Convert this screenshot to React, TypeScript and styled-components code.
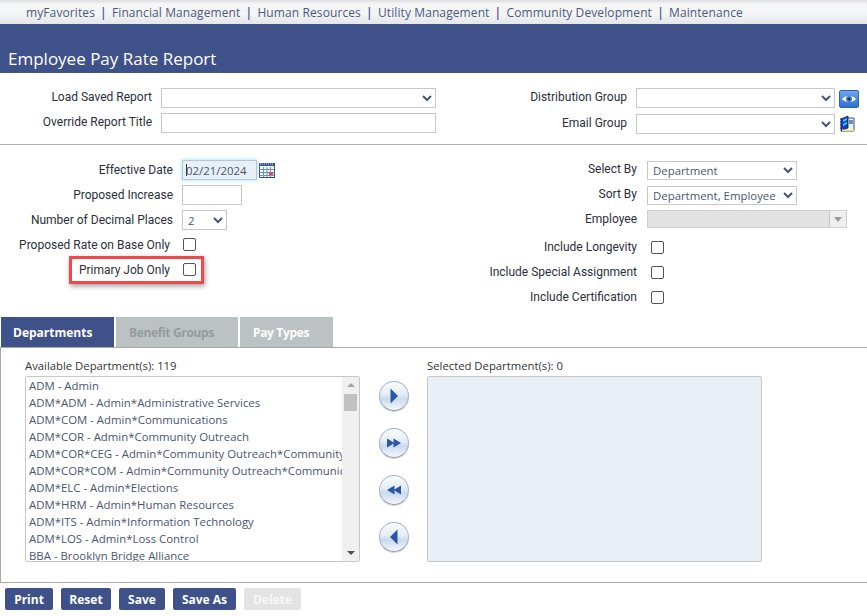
import React from 'react';
import styled, { createGlobalStyle } from 'styled-components';

const navItems = [
  'myFavorites',
  'Financial Management',
  'Human Resources',
  'Utility Management',
  'Community Development',
  'Maintenance',
];

const departments = [
  'ADM - Admin',
  'ADM*ADM - Admin*Administrative Services',
  'ADM*COM - Admin*Communications',
  'ADM*COR - Admin*Community Outreach',
  'ADM*COR*CEG - Admin*Community Outreach*Community',
  'ADM*COR*COM - Admin*Community Outreach*Communications',
  'ADM*ELC - Admin*Elections',
  'ADM*HRM - Admin*Human Resources',
  'ADM*ITS - Admin*Information Technology',
  'ADM*LOS - Admin*Loss Control',
  'BBA - Brooklyn Bridge Alliance',
];

const CalendarIcon = () => (
  <svg width="17" height="17" viewBox="0 0 17 17">
    <rect x="0.5" y="2.5" width="15" height="13" fill="#f3f6fb" stroke="#33528f" />
    <rect x="0" y="1" width="16" height="3" fill="#33528f" />
    <path d="M1 2h14" stroke="#dbe4f2" strokeDasharray="1 1" />
    <path d="M1 7.5h14M1 10.5h14M1 13.5h14M4.5 5v10M8 5v10M11.5 5v10" stroke="#6f8fc8" />
    <rect x="10" y="10" width="4" height="3" fill="#e0503c" />
  </svg>
);

const EyeIcon = () => (
  <svg width="18" height="16" viewBox="0 0 18 16">
    <path d="M2 8C5 4 13 4 16 8C13 12 5 12 2 8Z" fill="#fff" />
    <circle cx="9" cy="8" r="3" fill="#3f74c9" />
    <circle cx="9" cy="8" r="1.3" fill="#12306e" />
  </svg>
);

const BookIcon = () => (
  <svg width="17" height="18" viewBox="0 0 17 18">
    <path d="M1 4h2M1 7h2M1 10h2M1 13h2" stroke="#111" strokeWidth="1" />
    <path d="M2 16V4L9 1V13Z" fill="#1b3fc4" stroke="#0a1a66" strokeWidth="0.7" />
    <path d="M9 3h6v13H2L9 13Z" fill="#e9f6ff" stroke="#0a1a66" strokeWidth="0.8" />
    <path d="M10 6h4M10 8h4" stroke="#0a1a66" />
    <path d="M3 14.5h12V16H3Z" fill="#ffe84a" />
    <path d="M4 5l4-2v2l-4 2zM4 9l4-2v2l-4 2z" fill="#35d0ef" />
  </svg>
);

const MoveIcon = ({ dir, double }: { dir: 'left' | 'right'; double?: boolean }) => (
  <svg width="16" height="16" viewBox="0 0 16 16">
    <g fill="#2a56a6" transform={dir === 'left' ? 'matrix(-1 0 0 1 16 0)' : undefined}>
      {double ? (
        <>
          <path d="M1 3.5L8.5 8L1 12.5Z" />
          <path d="M7.5 3.5L15 8L7.5 12.5Z" />
        </>
      ) : (
        <path d="M4.5 0.5L12 8L4.5 15.5Z" />
      )}
    </g>
  </svg>
);

const App: React.FC = () => {
  return (
    <Page>
      <GlobalStyle />
      <TopNav>
        {navItems.map((item, i) => (
          <React.Fragment key={item}>
            {i > 0 && <NavDivider>|</NavDivider>}
            <NavLink>{item}</NavLink>
          </React.Fragment>
        ))}
      </TopNav>
      <TitleBar>
        <Title>Employee Pay Rate Report</Title>
      </TitleBar>

      <ReportSection>
        <FormColumn>
          <ReportRow $label={152}>
            <Label>Load Saved Report</Label>
            <Select $width={275}>
              <option></option>
            </Select>
          </ReportRow>
          <ReportRow $label={152}>
            <Label>Override Report Title</Label>
            <TextInput $width={275} />
          </ReportRow>
        </FormColumn>
        <GroupColumn>
          <ReportRow $label={127}>
            <Label>Distribution Group</Label>
            <Select $width={199}>
              <option></option>
            </Select>
            <EyeButton>
              <EyeIcon />
            </EyeButton>
          </ReportRow>
          <ReportRow $label={127}>
            <Label>Email Group</Label>
            <Select $width={199}>
              <option></option>
            </Select>
            <BookButton>
              <BookIcon />
            </BookButton>
          </ReportRow>
        </GroupColumn>
      </ReportSection>

      <ParamSection>
        <ParamColumn>
          <ParamRow $label={173}>
            <Label>Effective Date</Label>
            <DateField>
              <DateInput defaultValue="02/21/2024" />
            </DateField>
            <CalendarSlot>
              <CalendarIcon />
            </CalendarSlot>
          </ParamRow>
          <ParamRow $label={173}>
            <Label>Proposed Increase</Label>
            <TextInput $width={60} />
          </ParamRow>
          <ParamRow $label={173}>
            <Label>Number of Decimal Places</Label>
            <Select $width={45}>
              <option>2</option>
            </Select>
          </ParamRow>
          <CheckRow $label={170}>
            <Label>Proposed Rate on Base Only</Label>
            <Check type="checkbox" />
          </CheckRow>
          <CheckRow $label={170}>
            <Highlight />
            <Label>Primary Job Only</Label>
            <Check type="checkbox" />
          </CheckRow>
        </ParamColumn>
        <SelectColumn>
          <SelectRow $label={137}>
            <Label>Select By</Label>
            <Select $width={150} $height={19}>
              <option>Department</option>
            </Select>
          </SelectRow>
          <SelectRow $label={137}>
            <Label>Sort By</Label>
            <Select $width={150} $height={19}>
              <option>Department, Employee</option>
            </Select>
          </SelectRow>
          <SelectRow $label={137}>
            <Label>Employee</Label>
            <Combo>
              <ComboArrow />
            </Combo>
          </SelectRow>
          <IncludeRow $label={137}>
            <Label>Include Longevity</Label>
            <Check type="checkbox" />
          </IncludeRow>
          <IncludeRow $label={137}>
            <Label>Include Special Assignment</Label>
            <Check type="checkbox" />
          </IncludeRow>
          <IncludeRow $label={137}>
            <Label>Include Certification</Label>
            <Check type="checkbox" />
          </IncludeRow>
        </SelectColumn>
      </ParamSection>

      <TabStrip>
        <Tab $width={113} $state="active">Departments</Tab>
        <Tab $width={122} $state="disabled">Benefit Groups</Tab>
        <Tab $width={93} $state="idle">Pay Types</Tab>
      </TabStrip>

      <TabPanel>
        <ListColumn>
          <ListTitle>Available Department(s): 119</ListTitle>
          <ListBox>
            <ListItems>
              {departments.map((d) => (
                <ListItem key={d}>{d}</ListItem>
              ))}
            </ListItems>
            <ScrollTrack>
              <ScrollUp />
              <ScrollThumb />
              <ScrollDown />
            </ScrollTrack>
          </ListBox>
        </ListColumn>
        <MoveColumn>
          <MoveButton><MoveIcon dir="right" /></MoveButton>
          <MoveButton><MoveIcon dir="right" double /></MoveButton>
          <MoveButton><MoveIcon dir="left" double /></MoveButton>
          <MoveButton><MoveIcon dir="left" /></MoveButton>
        </MoveColumn>
        <ListColumn>
          <ListTitle>Selected Department(s): 0</ListTitle>
          <SelectedBox />
        </ListColumn>
      </TabPanel>

      <Actions>
        <ActionButton $width={48}>Print</ActionButton>
        <ActionButton $width={50}>Reset</ActionButton>
        <ActionButton $width={46}>Save</ActionButton>
        <ActionButton $width={63}>Save As</ActionButton>
        <ActionButton $width={57} disabled>Delete</ActionButton>
      </Actions>
    </Page>
  );
};

export default App;

const GlobalStyle = createGlobalStyle`
  html, body {
    margin: 0;
    padding: 0;
    background: #fff;
    overflow: hidden;
  }
  * {
    box-sizing: border-box;
  }
`;

const Page = styled.div`
  width: 867px;
  height: 616px;
  overflow: hidden;
  font-family: Roboto, 'Liberation Sans', sans-serif;
  font-size: 12px;
  color: #2b2f3a;
`;

const TopNav = styled.div`
  display: flex;
  align-items: center;
  height: 24px;
  padding-left: 26px;
  background: linear-gradient(to bottom, #dcdde0 0, #f6f6f7 4px, #f3f4f5 60%, #e3e5e8 100%);
  font-family: 'Open Sans', sans-serif;
  font-size: 12px;
  letter-spacing: 0.1px;
  color: #4a5a7c;
`;

const NavLink = styled.span`
  white-space: nowrap;
`;

const NavDivider = styled.span`
  width: 17px;
  text-align: center;
  color: #3f5189;
  font-weight: 600;
`;

const TitleBar = styled.div`
  display: flex;
  align-items: flex-end;
  height: 49px;
  padding: 0 0 2px 8px;
  background: #3f5189;
`;

const Title = styled.h1`
  margin: 0;
  font-family: 'Open Sans', sans-serif;
  font-size: 17px;
  font-weight: 400;
  line-height: 24px;
  color: #fff;
`;

const ReportSection = styled.div`
  display: flex;
  height: 72px;
  padding-top: 15px;
  border-bottom: 1px solid #b0b0b0;
`;

const FormColumn = styled.div`
  display: flex;
  flex-direction: column;
  gap: 5px;
  width: 500px;
`;

const GroupColumn = styled.div`
  display: flex;
  flex-direction: column;
  gap: 6px;
`;

const ReportRow = styled.div<{ $label: number }>`
  display: grid;
  grid-template-columns: ${(p) => p.$label}px auto auto;
  column-gap: 9px;
  justify-content: start;
  align-items: center;
  height: 20px;
`;

const Label = styled.label`
  position: relative;
  top: -1px;
  justify-self: end;
  white-space: nowrap;
  color: #2b2f3a;
`;

const Select = styled.select<{ $width: number; $height?: number }>`
  width: ${(p) => p.$width}px;
  height: ${(p) => p.$height ?? 20}px;
  padding: 0 0 0 1px;
  border: 1px solid #c8c8c8;
  border-radius: 0;
  background: #fff;
  font-family: 'Open Sans', sans-serif;
  font-size: 11.4px;
  color: #4a5570;
  outline: none;
`;

const TextInput = styled.input<{ $width: number }>`
  display: block;
  width: ${(p) => p.$width}px;
  height: 20px;
  padding: 0 4px;
  border: 1px solid #c8c8c8;
  background: #fff;
  outline: none;
`;

const EyeButton = styled.span`
  display: flex;
  align-items: center;
  justify-content: center;
  width: 20px;
  height: 18px;
  margin: 2px 0 0 -5px;
  border: 1px solid #2f62b5;
  border-radius: 2px;
  background: linear-gradient(to bottom, #6fa6ea, #2f6fd0);
  svg {
    flex: none;
  }
`;

const BookButton = styled.span`
  display: flex;
  margin-left: -5px;
`;

const ParamSection = styled.div`
  display: flex;
  height: 172px;
`;

const ParamColumn = styled.div`
  display: flex;
  flex-direction: column;
  gap: 5px;
  width: 500px;
  padding-top: 15px;
  ${Label} {
    top: 0;
  }
`;

const SelectColumn = styled.div`
  display: flex;
  flex-direction: column;
  gap: 5px;
  padding-top: 15px;
`;

const ParamRow = styled.div<{ $label: number }>`
  display: grid;
  grid-template-columns: ${(p) => p.$label}px auto auto;
  column-gap: 9px;
  justify-content: start;
  align-items: center;
  height: 20px;
`;

const SelectRow = styled(ParamRow)`
  column-gap: 10px;
`;

const Check = styled.input`
  appearance: none;
  width: 13px;
  height: 13px;
  margin: 0;
  border: 1px solid #555;
  border-radius: 2px;
  background: #fff;
`;

const CheckRow = styled(ParamRow)`
  position: relative;
  column-gap: 13px;
  ${Check} {
    margin-bottom: 1px;
  }
`;

const IncludeRow = styled(ParamRow)`
  column-gap: 14px;
  ${Label} {
    top: 0;
  }
  &:nth-child(4) {
    margin-top: 2px;
  }
`;

const Highlight = styled.span`
  position: absolute;
  left: 69px;
  top: -4px;
  width: 135px;
  height: 28px;
  border: 3px solid #f04848;
  box-shadow: 1px 2px 5px rgba(0, 0, 0, 0.4);
  pointer-events: none;
`;

const DateField = styled.div`
  position: relative;
  width: 75px;
  height: 20px;
  &::after {
    content: '';
    position: absolute;
    left: 4px;
    top: 4px;
    width: 1px;
    height: 12px;
    background: #333;
  }
`;

const DateInput = styled.input`
  display: block;
  width: 100%;
  height: 100%;
  padding: 0 0 0 3px;
  border: 1px solid #b9c6d2;
  background: #e8f0f7;
  box-shadow: 0 0 4px #8fe0f5;
  font-family: 'Open Sans', sans-serif;
  font-size: 11.4px;
  color: #4a5570;
  outline: none;
`;

const CalendarSlot = styled.span`
  display: flex;
  margin-left: -7px;
`;

const Combo = styled.div`
  position: relative;
  display: flex;
  justify-content: flex-end;
  align-self: start;
  width: 200px;
  height: 18px;
  border: 1px solid #d0d0d0;
  background: #e2e2e2;
`;

const ComboArrow = styled.span`
  position: relative;
  width: 17px;
  border-left: 1px solid #c8c8c8;
  background: #efefef;
  &::after {
    content: '';
    position: absolute;
    left: 4px;
    top: 6px;
    border-left: 4px solid transparent;
    border-right: 4px solid transparent;
    border-top: 5px solid #9a9a9a;
  }
`;

const TabStrip = styled.div`
  display: flex;
  align-items: flex-end;
  gap: 2px;
  height: 30px;
  padding-left: 1px;
`;

const tabColors = {
  active: { bg: '#3f5189', fg: '#fff' },
  disabled: { bg: '#bcc2c4', fg: '#969b9e' },
  idle: { bg: '#bcc2c4', fg: '#fff' },
};

const Tab = styled.div<{ $width: number; $state: keyof typeof tabColors }>`
  display: flex;
  align-items: center;
  width: ${(p) => p.$width}px;
  height: 30px;
  padding: 1px 0 0 ${(p) => (p.$state === 'active' ? 12 : 13)}px;
  background: ${(p) => tabColors[p.$state].bg};
  color: ${(p) => tabColors[p.$state].fg};
  font-family: 'Open Sans', sans-serif;
  font-size: 12px;
  font-weight: 700;
  letter-spacing: ${(p) => (p.$state === 'active' ? 0 : -0.35)}px;
`;

const TabPanel = styled.div`
  display: flex;
  height: 236px;
  padding: 10px 0 0 24px;
  border-top: 1px solid #a8a8a8;
  border-left: 1px solid #a8a8a8;
  border-bottom: 1px solid #a8a8a8;
`;

const ListColumn = styled.div`
  display: flex;
  flex-direction: column;
  width: 335px;
`;

const ListTitle = styled.div`
  height: 18px;
  line-height: 16px;
  font-family: 'Open Sans', sans-serif;
  font-size: 11.3px;
  color: #333;
  white-space: nowrap;
`;

const ListBox = styled.div`
  display: flex;
  height: 186px;
  border: 1px solid #c8c8c8;
  border-radius: 2px;
  overflow: hidden;
`;

const ListItems = styled.div`
  flex: 1;
  min-width: 0;
  padding-left: 3px;
  overflow: hidden;
`;

const ListItem = styled.div`
  height: 17px;
  line-height: 17px;
  font-family: 'Open Sans', sans-serif;
  font-size: 11.4px;
  color: #4a5570;
  white-space: nowrap;
`;

const ScrollTrack = styled.div`
  position: relative;
  flex: none;
  width: 17px;
  background: #f0f0f0;
`;

const ScrollThumb = styled.div`
  position: absolute;
  top: 17px;
  left: 2px;
  width: 13px;
  height: 17px;
  background: #c1c1c1;
`;

const ScrollUp = styled.span`
  position: absolute;
  left: 5px;
  top: 6px;
  border-left: 4px solid transparent;
  border-right: 4px solid transparent;
  border-bottom: 4px solid #a3a3a3;
`;

const ScrollDown = styled.span`
  position: absolute;
  left: 5px;
  bottom: 6px;
  border-left: 4px solid transparent;
  border-right: 4px solid transparent;
  border-top: 4px solid #505050;
`;

const SelectedBox = styled.div`
  height: 186px;
  border: 1px solid #c8c8c8;
  border-radius: 2px;
  background: #e8eff7;
`;

const MoveColumn = styled.div`
  display: flex;
  flex-direction: column;
  align-items: center;
  gap: 17px;
  width: 67px;
  padding-top: 23px;
`;

const MoveButton = styled.span`
  display: flex;
  align-items: center;
  justify-content: center;
  width: 30px;
  height: 30px;
  border: 1px solid #a9b4c4;
  border-bottom-color: #8d96a5;
  border-radius: 50%;
  background: linear-gradient(to bottom, #fafcfe 0, #e3ecf7 45%, #c9daef 60%, #f4f7fb 100%);
  box-shadow: 0 1px 1px rgba(0, 0, 0, 0.2);
`;

const Actions = styled.div`
  display: flex;
  gap: 8px;
  padding: 5px 0 0 5px;
`;

const ActionButton = styled.button<{ $width: number }>`
  width: ${(p) => p.$width}px;
  height: 22px;
  padding: 0;
  border: none;
  border-radius: 2px;
  background: ${(p) => (p.disabled ? '#e3e3e3' : '#3f5189')};
  color: ${(p) => (p.disabled ? '#f7f7f7' : '#fff')};
  font-family: 'Open Sans', sans-serif;
  font-size: 12px;
  font-weight: 700;
`;
